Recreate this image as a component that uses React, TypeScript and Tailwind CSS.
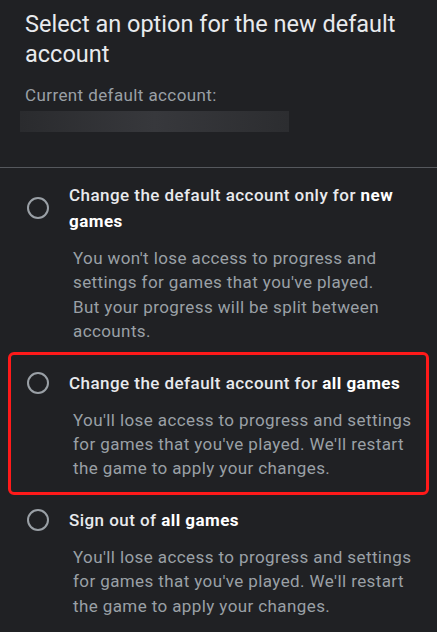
import React from "react";

function Radio() {
  return (
    <div className="w-[22px] h-[22px] shrink-0 rounded-full border-2 border-[#9aa0a6]" />
  );
}

type OptProps = {
  title: React.ReactNode;
  desc: React.ReactNode;
  highlight?: boolean;
  pad: string;
};

function Option({ title, desc, highlight, pad }: OptProps) {
  return (
    <div
      className={
        "mx-[8px] border-[3px] rounded-[6px] pl-[16px] pr-[4px] " +
        pad +
        (highlight ? " border-[#ff1a1a]" : " border-transparent")
      }
    >
      <div className="flex items-center gap-[20px]">
        <Radio />
        <div className="text-[17px] leading-[26px] font-medium text-[#e8eaed] tracking-[0.45px]">
          {title}
        </div>
      </div>
      <p className="ml-[46px] mt-[12px] text-[17px] leading-[24.4px] text-[#9aa0a6] tracking-[0.4px]">
        {desc}
      </p>
    </div>
  );
}

export default function App() {
  return (
    <div
      className="w-[437px] h-[632px] overflow-hidden bg-[#202124]"
      style={{ fontFamily: "Roboto, 'Noto Sans', sans-serif" }}
    >
      <div className="px-[25px] pt-[9px]">
        <h1 className="text-[23.5px] leading-[30px] text-[#e8eaed] font-normal">
          Select an option for the new default account
        </h1>
        <div className="mt-[14px] text-[17px] leading-[24px] text-[#9aa0a6] tracking-[0.4px]">
          Current default account:
        </div>
        <div className="-ml-[5px] mt-[4px] w-[269px] h-[21px] bg-gradient-to-r from-[#2a2b2e] via-[#37383c] to-[#2c2d30]" />
      </div>
      <div className="mt-[35px] h-px bg-[#55585d]" />
      <div className="flex flex-col">
        <Option
          pad="pt-[11px] pb-[5px]"
          title={
            <>
              Change the default account only for{" "}
              <span className="font-bold text-white">new games</span>
            </>
          }
          desc={
            <>
              You won't lose access to progress and settings for games that you've played.
              <br />
              But your progress will be split between accounts.
            </>
          }
        />
        <Option
          highlight
          pad="pt-[15px] pb-[11px]"
          title={
            <>
              Change the default account for{" "}
              <span className="font-bold text-white">all games</span>
            </>
          }
          desc="You'll lose access to progress and settings for games that you've played. We'll restart the game to apply your changes."
        />
        <Option
          pad="pt-[9px] pb-[11px]"
          title={
            <>
              Sign out of <span className="font-bold text-white">all games</span>
            </>
          }
          desc="You'll lose access to progress and settings for games that you've played. We'll restart the game to apply your changes."
        />
      </div>
    </div>
  );
}
